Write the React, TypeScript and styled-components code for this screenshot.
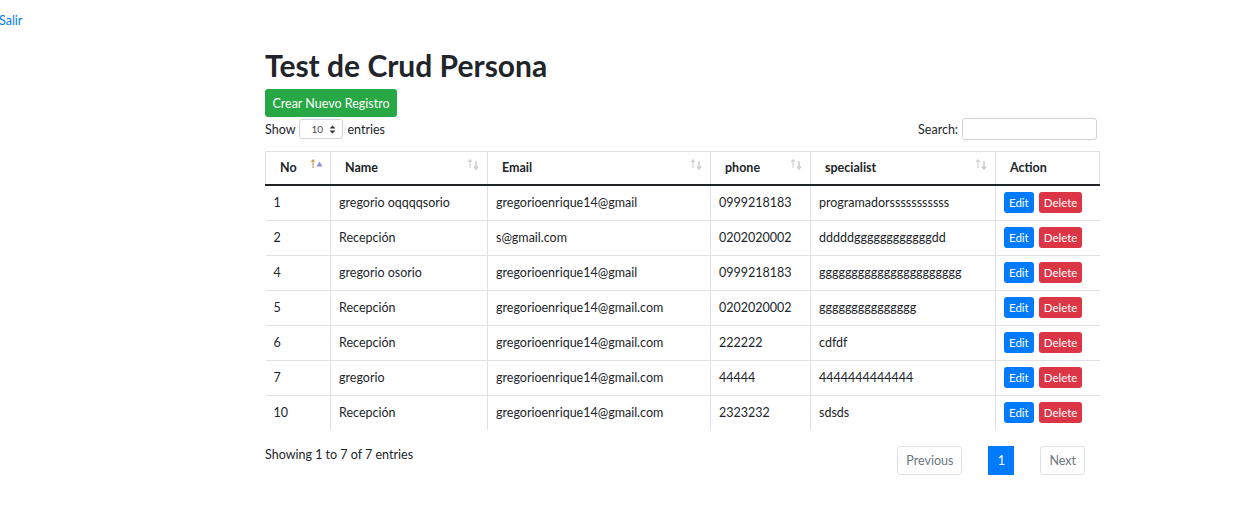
import React from "react";
import styled, { createGlobalStyle } from "styled-components";

const Global = createGlobalStyle`
  html, body { margin: 0; padding: 0; background: #fff; }
  body {
    font-family: Lato, "Noto Sans", sans-serif;
    font-size: 12.5px;
    color: #212529;
  }
`;

const TopLink = styled.a`
  display: block;
  color: #007bff;
  text-decoration: none;
  font-size: 12.5px;
  line-height: 18px;
  padding-top: 12px;
  margin-left: -1px;
`;

const Main = styled.main`
  width: 834px;
  margin: 17px 0 0 265px;
`;

const Title = styled.h1`
  margin: 0;
  font-size: 30px;
  font-weight: 700;
  line-height: 36px;
  color: #212529;
`;

const CreateButton = styled.button`
  display: block;
  margin-top: 6px;
  height: 28px;
  width: 132px;
  padding: 0;
  border: none;
  border-radius: 3px;
  background: #28a745;
  color: #fff;
  font-family: inherit;
  font-size: 12.5px;
  white-space: nowrap;
  cursor: pointer;
`;

const Controls = styled.div`
  display: flex;
  justify-content: space-between;
  align-items: center;
  margin-top: 1px;
  height: 22px;
`;

const LengthLabel = styled.label`
  display: flex;
  align-items: center;
  gap: 4px;
`;

const SelectBox = styled.span`
  display: inline-flex;
  align-items: center;
  justify-content: space-between;
  width: 44px;
  height: 20px;
  box-sizing: border-box;
  padding: 0 6px 0 11px;
  border: 1px solid #ced4da;
  border-radius: 3px;
  font-size: 10px;
  color: #495057;
`;

const SearchLabel = styled.label`
  display: flex;
  align-items: center;
  gap: 4px;
  margin-right: 2px;
`;

const SearchInput = styled.input`
  width: 135px;
  height: 22px;
  box-sizing: border-box;
  border: 1px solid #ced4da;
  border-radius: 3px;
`;

const Table = styled.table`
  width: 834px;
  margin-top: 11px;
  border-collapse: collapse;
  table-layout: fixed;
`;

const Th = styled.th<{ $w: number }>`
  position: relative;
  width: ${(p) => p.$w}px;
  height: 33px;
  padding: 0 14px;
  box-sizing: border-box;
  text-align: left;
  font-weight: 700;
  font-size: 12.5px;
  border: 1px solid #dee2e6;
  border-bottom: 2px solid #212529;
`;

const SortIcon = styled.span`
  position: absolute;
  right: 6px;
  top: 6px;
  display: flex;
  align-items: flex-start;
`;

const Td = styled.td<{ $last?: boolean }>`
  height: 34px;
  padding: 0 8px;
  vertical-align: middle;
  border-top: 1px solid #dee2e6;
  border-right: ${(p) => (p.$last ? "none" : "1px solid #dee2e6")};
  white-space: nowrap;
  overflow: hidden;
`;

const ActionButton = styled.button<{ $kind: "edit" | "delete" }>`
  height: 21px;
  padding: 0 5px;
  margin-right: 5px;
  border: none;
  border-radius: 3px;
  background: ${(p) => (p.$kind === "edit" ? "#007bff" : "#dc3545")};
  color: #fff;
  font-family: inherit;
  font-size: 11.5px;
  vertical-align: middle;
`;

const Footer = styled.div`
  display: flex;
  justify-content: space-between;
  align-items: flex-start;
  margin-top: 16px;
`;

const Info = styled.div`
  line-height: 18px;
`;

const Pager = styled.div`
  display: flex;
  gap: 26px;
  margin-right: 14px;
`;

const PageButton = styled.span<{ $active?: boolean }>`
  display: inline-flex;
  align-items: center;
  justify-content: center;
  height: 29px;
  box-sizing: border-box;
  padding: 0 ${(p) => (p.$active ? "0" : "8px")};
  min-width: ${(p) => (p.$active ? "26px" : "0")};
  border: ${(p) => (p.$active ? "none" : "1px solid #dee2e6")};
  border-radius: ${(p) => (p.$active ? "0" : "3px")};
  background: ${(p) => (p.$active ? "#007bff" : "#fff")};
  color: ${(p) => (p.$active ? "#fff" : "#6c757d")};
  font-size: 12.5px;
`;

const Sort = ({ active }: { active?: boolean }) => (
  <SortIcon>
    <svg width="14" height="14" viewBox="0 0 14 14">
      <path d="M3 2 L3 10 M1.2 4 L3 1.8 L4.8 4" stroke={active ? "#c79a4a" : "#cfcfcf"} strokeWidth="1.1" fill="none" />
      {active ? (
        <path d="M6.5 8.5 L9.5 3.5 L12.5 8.5 Z" fill="#8b8fe0" />
      ) : (
        <path d="M9 3 L9 11 M7 8.5 L9 11 L11 8.5" stroke="#cfcfcf" strokeWidth="1.6" fill="none" />
      )}
    </svg>
  </SortIcon>
);

const rows = [
  ["1", "gregorio oqqqqsorio", "gregorioenrique14@gmail", "0999218183", "programadorsssssssssss"],
  ["2", "Recepción", "s@gmail.com", "0202020002", "dddddggggggggggggdd"],
  ["4", "gregorio osorio", "gregorioenrique14@gmail", "0999218183", "gggggggggggggggggggggg"],
  ["5", "Recepción", "gregorioenrique14@gmail.com", "0202020002", "ggggggggggggggg"],
  ["6", "Recepción", "gregorioenrique14@gmail.com", "222222", "cdfdf"],
  ["7", "gregorio", "gregorioenrique14@gmail.com", "44444", "4444444444444"],
  ["10", "Recepción", "gregorioenrique14@gmail.com", "2323232", "sdsds"],
];

const cols: [string, number][] = [
  ["No", 65],
  ["Name", 157],
  ["Email", 223],
  ["phone", 100],
  ["specialist", 185],
  ["Action", 104],
];

export default function App() {
  return (
    <>
      <Global />
      <TopLink href="#">Salir</TopLink>
      <Main>
        <Title>Test de Crud Persona</Title>
        <CreateButton>Crear Nuevo Registro</CreateButton>
        <Controls>
          <LengthLabel>
            Show
            <SelectBox>
              10
              <svg width="7" height="9" viewBox="0 0 7 9">
                <path d="M0.5 3.5 L3.5 0.5 L6.5 3.5 Z M0.5 5.5 L3.5 8.5 L6.5 5.5 Z" fill="#333" />
              </svg>
            </SelectBox>
            entries
          </LengthLabel>
          <SearchLabel>
            Search:
            <SearchInput type="text" />
          </SearchLabel>
        </Controls>
        <Table>
          <thead>
            <tr>
              {cols.map(([name, w], i) => (
                <Th key={name} $w={w}>
                  {name}
                  {i < 5 && <Sort active={i === 0} />}
                </Th>
              ))}
            </tr>
          </thead>
          <tbody>
            {rows.map((r) => (
              <tr key={r[0]}>
                {r.map((c, i) => (
                  <Td key={i}>{c}</Td>
                ))}
                <Td $last>
                  <ActionButton $kind="edit">Edit</ActionButton>
                  <ActionButton $kind="delete">Delete</ActionButton>
                </Td>
              </tr>
            ))}
          </tbody>
        </Table>
        <Footer>
          <Info>Showing 1 to 7 of 7 entries</Info>
          <Pager>
            <PageButton>Previous</PageButton>
            <PageButton $active>1</PageButton>
            <PageButton>Next</PageButton>
          </Pager>
        </Footer>
      </Main>
    </>
  );
}
